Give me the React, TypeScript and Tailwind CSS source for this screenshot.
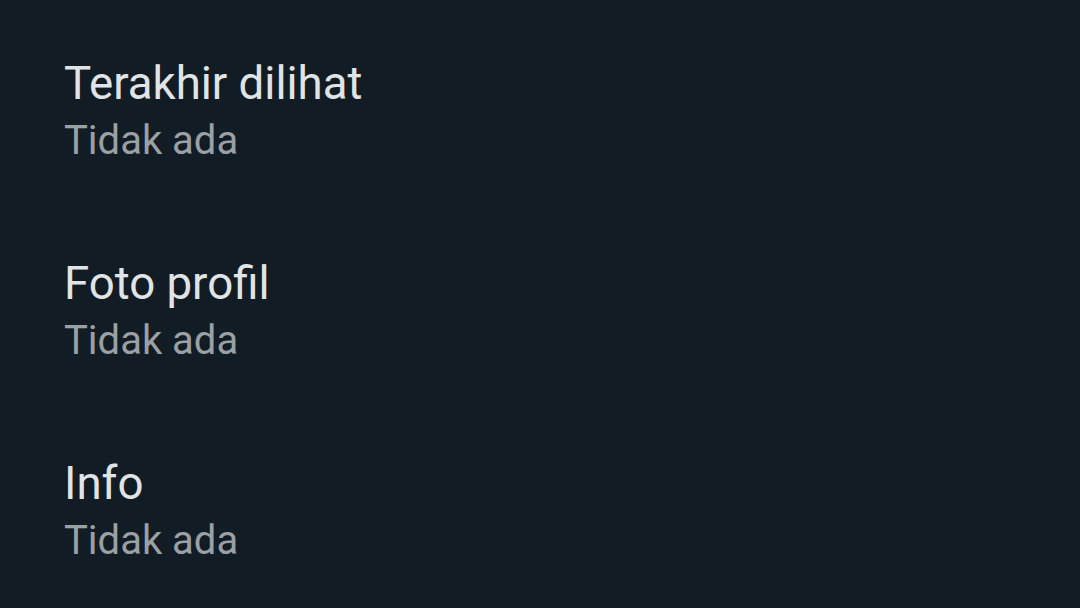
const rows = [
  { title: "Terakhir dilihat", value: "Tidak ada" },
  { title: "Foto profil", value: "Tidak ada" },
  { title: "Info", value: "Tidak ada" },
];

export default function App() {
  return (
    <div
      className="w-[1080px] h-[608px] bg-[#121c24] overflow-hidden"
      style={{ fontFamily: "Roboto, 'Noto Sans', sans-serif" }}
    >
      {rows.map((row) => (
        <div key={row.title} className="h-[200px] pl-16 pt-[56px]">
          <div className="text-[45.6px] leading-[56px] text-[#e1e4e6]">
            {row.title}
          </div>
          <div className="mt-[1px] text-[40px] leading-[56px] text-[#9aa0a5]">
            {row.value}
          </div>
        </div>
      ))}
    </div>
  );
}
